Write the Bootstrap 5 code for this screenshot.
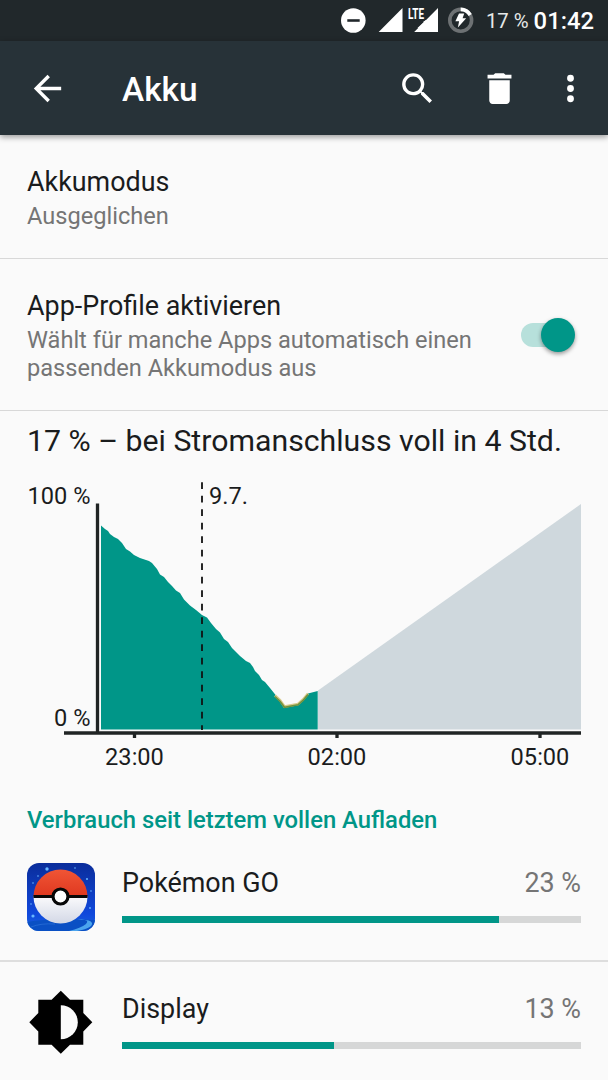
<!DOCTYPE html>
<html lang="de">
<head>
<meta charset="utf-8">
<meta name="viewport" content="width=device-width, initial-scale=1">
<title>Akku</title>
<link rel="stylesheet" href="https://cdn.jsdelivr.net/npm/bootstrap@5.3.0/dist/css/bootstrap.min.css">
<style>
  body { font-family: Roboto, sans-serif; background: #fafafa; color: #1a1c1d; font-size: 26.9px; line-height: 32px; overflow: hidden; height: 1080px; }
  svg { display: block; flex: none; }
  .status-bar { height: 41px; background: #21282b; color: #fff; padding-right: 14px; }
  .status-pct { font-size: 20.3px; margin-left: 12px; color: #e6e8e8; }
  .status-time { font-size: 23.8px; font-weight: 500; margin-left: 5px; }
  .app-bar { height: 94px; background: #273238; color: #fff; padding: 0 17px 0 27px; box-shadow: 0 2px 6px rgba(0,0,0,.4); }
  .app-title { font-size: 33.4px; font-weight: 500; line-height: 40px; margin-left: 54px; padding-top: 3px; }
  .action-search { margin-right: 41px; }
  .action-delete { margin-right: 30px; }
  .setting { padding: 31px 33px 28px 27px; border-bottom: 1px solid #d8d8d8; }
  .hint { font-size: 23.6px; line-height: 28px; color: #757575; margin-top: 4px; }
  .toggle { width: 54px; height: 34px; margin-bottom: 3px; }
  .toggle-track { width: 46px; height: 24px; background: #b7e0db; }
  .toggle-thumb { width: 34px; height: 34px; background: #009688; right: 0; top: 0; box-shadow: 0 2px 4px rgba(0,0,0,.4); }
  .forecast { font-size: 30.25px; line-height: 36px; padding: 12px 27px 0; }
  .chart { margin-top: -1px; }
  .chart text { font-family: Roboto, sans-serif; font-size: 23.6px; fill: #1a1c1d; }
  .section-title { font-size: 23.8px; font-weight: 500; line-height: 28px; color: #009688; padding-left: 27px; margin-top: 31px; }
  .usage { padding: 29px 27px 0; height: 126px; gap: 27px; }
  .usage + .usage { border-top: 2px solid #dedede; padding-top: 27px; }
  .progress { height: 7px; border-radius: 0; background: #d6d7d7; margin-top: 17px; }
  .progress-bar { background: #009688; }
  .share { color: #757575; }
</style>
</head>
<body>
<div class="status-bar d-flex align-items-center justify-content-end">
  <svg width="134" height="41" viewBox="341 0 134 41">
    <circle cx="354.3" cy="20.5" r="12.3" fill="#fff"/><path d="M348.3 20.5h12.4" stroke="#21282b" stroke-width="2.6"/>
    <path d="M403.500 8v24H379.700zM439 8v24H415.200z" fill="#fff"/>
    <rect x="407" y="6" width="20" height="15" fill="#21282b"/>
    <path d="M427 20v2h-3z" fill="#fff"/><path d="M427 20l-8.500 8h8.500z" fill="#fff"/>
    <text x="409" y="18.800" font-family="Roboto" font-size="14.500" font-weight="700" textLength="16" lengthAdjust="spacingAndGlyphs" fill="#fff">LTE</text>
    <circle cx="461.700" cy="20.300" r="10.900" fill="none" stroke="#6d7173" stroke-width="3.600"/>
    <path d="M461.700 9.400a10.900 10.900 0 0 1 9.500 5.600" fill="none" stroke="#fff" stroke-width="3.600"/>
    <path d="M460 13.500h5.200l-1.600 4.800h3.600l-8.300 9.200 1.200-6.300h-3.700z" fill="#fff"/>
  </svg>
  <span class="status-pct">17 %</span><span class="status-time">01:42</span>
</div>
<header class="app-bar d-flex align-items-center position-relative">
  <svg width="41" height="41" viewBox="0 0 24 24" fill="#fff"><path d="M20 11H7.830l5.590-5.590L12 4l-8 8 8 8 1.410-1.410L7.830 13H20z"/></svg>
  <div class="app-title me-auto">Akku</div>
  <svg class="action-search" width="41" height="41" viewBox="0 0 24 24" fill="#fff"><path d="M15.500 14h-.79l-.28-.27A6.471 6.471 0 0 0 16 9.500 6.500 6.500 0 1 0 9.500 16c1.610 0 3.090-.59 4.230-1.570l.27.28v.79l5 4.990L20.490 19zm-6 0C7.010 14 5 11.990 5 9.500S7.010 5 9.500 5 14 7.010 14 9.500 11.990 14 9.500 14z"/></svg>
  <svg class="action-delete" width="41" height="41" viewBox="0 0 24 24" fill="#fff"><path d="M6 19c0 1.100.9 2 2 2h8c1.100 0 2-.9 2-2V7.200H6zM19 4h-3.500l-1-1h-5l-1 1H5v2.200h14z"/></svg>
  <svg width="41" height="41" viewBox="0 0 24 24" fill="#fff"><path d="M12 8a2 2 0 1 0 0-4 2 2 0 0 0 0 4zm0 2a2 2 0 1 0 0 4 2 2 0 0 0 0-4zm0 6a2 2 0 1 0 0 4 2 2 0 0 0 0-4z"/></svg>
</header>
<main>
  <section class="setting">
    <div>Akkumodus</div>
    <div class="hint">Ausgeglichen</div>
  </section>
  <section class="setting d-flex justify-content-between">
    <div>
      <div>App-Profile aktivieren</div>
      <div class="hint">Wählt für manche Apps automatisch einen<br>passenden Akkumodus aus</div>
    </div>
    <div class="toggle position-relative d-flex align-items-center align-self-center">
      <div class="toggle-track rounded-pill"></div>
      <div class="toggle-thumb rounded-circle position-absolute"></div>
    </div>
  </section>
  <div class="forecast text-nowrap">17 % – bei Stromanschluss voll in 4 Std.</div>
  <svg class="chart" width="608" height="317" viewBox="0 458 608 317">
    <path d="M318 690.500L581 504V729.500H318z" fill="#cfd8dd"/>
    <path d="M101 525.500L105 529 108 531 110 534 114 537 118 539 122 543 126 549 130 551.500 134 555 140 558 149 561 152 563 157 569 160 574.500 164 577 168 582 172 586 176 590.500 180 593 184 599.500 190 605.500 196 610 202 615 207 617.500 211 623 216 629 220 632.500 224 639 228 642 232 648 240 656 246 661 250 663 253 667 255 671 259 675 262 680 265 682 270 688 276 695.500 280 700 284 707 298 704.500 303 700 308 693.500 317.700 691V729.500H101z" fill="#009688"/>
    <path d="M275 695.500L280 700 284.500 706.500 298 704 303 699.500 308 693.500" fill="none" stroke="#d8c98b" stroke-width="2.500"/>
    <path d="M275 696.500L280 701.200 284.500 707.300 298 704.800 303 700.500 308 694.500" fill="none" stroke="#6f933f" stroke-width="1.700"/>
    <path d="M202 482.300V730" stroke="#111" stroke-width="1.800" stroke-dasharray="6.750 6.750"/>
    <path d="M97.500 503.500V733M64 733H581" stroke="#202424" stroke-width="3.300" fill="none"/>
    <path d="M134.500 733v5M337 733v5M540 733v5" stroke="#202424" stroke-width="3.300"/>
    <text x="90.500" y="503.500" text-anchor="end">100 %</text>
    <text x="90.500" y="726" text-anchor="end">0 %</text>
    <text x="209" y="503.500">9.7.</text>
    <g text-anchor="middle"><text x="134.500" y="764.500">23:00</text><text x="337" y="764.500">02:00</text><text x="540" y="764.500">05:00</text></g>
  </svg>
  <h2 class="section-title mb-0">Verbrauch seit letztem vollen Aufladen</h2>
  <div class="usage d-flex">
    <svg width="68" height="68" viewBox="0 0 68 68">
      <defs>
        <linearGradient id="sky" x2="0" y2="1"><stop offset="0" stop-color="#0a2d9b"/><stop offset=".75" stop-color="#1048dc"/><stop offset="1" stop-color="#1b66dc"/></linearGradient>
        <linearGradient id="red" x2="0" y2="1"><stop offset="0" stop-color="#f05535"/><stop offset="1" stop-color="#df3820"/></linearGradient>
        <linearGradient id="white" x2="0" y2="1"><stop offset="0" stop-color="#fafafc"/><stop offset="1" stop-color="#d3d8e6"/></linearGradient>
        <clipPath id="tile"><rect width="68" height="68" rx="12"/></clipPath>
      </defs>
      <g clip-path="url(#tile)">
        <rect width="68" height="68" fill="url(#sky)"/>
        <path d="M0 59Q22 55 68 57V68H0z" fill="#0a50c4"/>
        <path d="M50 57q14-1 9 4-5 4-17 7h8q16-3 15-8-2-4-15-3z" fill="#4ba5ee"/>
        <path d="M4 64q10-4 24-3" stroke="#2368d2" fill="none"/>
        <g fill="#69b7ff"><circle cx="20" cy="6" r="1.700"/><circle cx="6" cy="53" r="1.600"/><circle cx="6" cy="20" r=".8"/><circle cx="11" cy="13" r=".8"/><circle cx="48" cy="5" r=".8"/><circle cx="60" cy="16" r="1"/><circle cx="64" cy="28" r=".8"/><circle cx="63" cy="45" r=".9"/><circle cx="4" cy="41" r=".8"/></g>
        <path d="M6.500 33.500a27 27 0 0 1 54 0z" fill="url(#red)"/>
        <path d="M6.500 33.500a27 27 0 0 0 54 0z" fill="url(#white)"/>
        <path d="M6.500 33.500h54" stroke="#080808" stroke-width="3"/>
        <circle cx="33.500" cy="33.500" r="7.500" fill="#fff" stroke="#080808" stroke-width="3.200"/>
      </g>
    </svg>
    <div class="flex-grow-1 pt-1">
      <div class="d-flex justify-content-between"><span>Pokémon GO</span><span class="share">23 %</span></div>
      <div class="progress"><div class="progress-bar" style="width:82.1%"></div></div>
    </div>
  </div>
  <div class="usage d-flex">
    <svg width="68" height="68" viewBox="0 1 68 68"><path d="M33.800 2.700L43 11.800H56.300V25L65.300 34.200 56.300 43.400V56.700H43L33.800 65.800 24.600 56.700H11.300V43.400L2.300 34.200 11.300 25V11.800H24.600z"/><path d="M33.800 17.300a17 17 0 0 1 0 34z" fill="#fafafa"/></svg>
    <div class="flex-grow-1 pt-1">
      <div class="d-flex justify-content-between"><span>Display</span><span class="share">13 %</span></div>
      <div class="progress"><div class="progress-bar" style="width:46.1%"></div></div>
    </div>
  </div>
</main>
<script src="https://cdn.jsdelivr.net/npm/bootstrap@5.3.0/dist/js/bootstrap.bundle.min.js"></script>
</body>
</html>
